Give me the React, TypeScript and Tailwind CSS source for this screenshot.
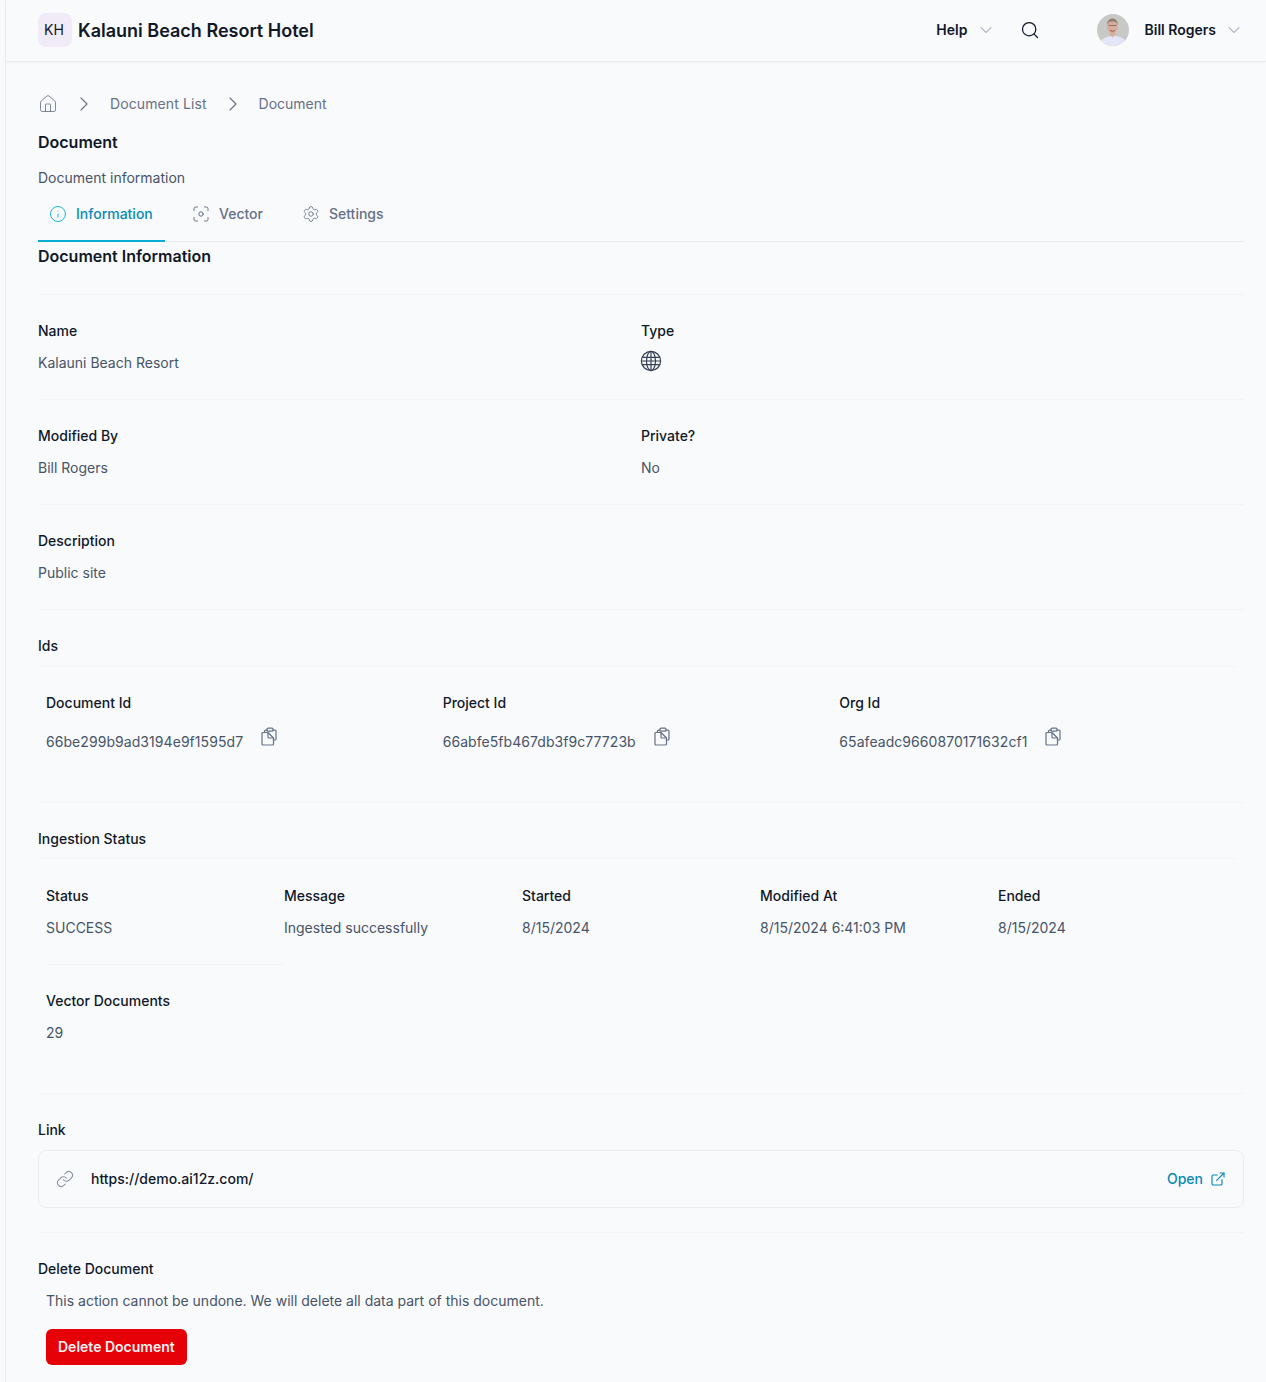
import React from "react";
import { ChevronDown, ChevronRight, Search, House, Info, Settings, Link, ExternalLink } from "lucide-react";

function Field({ label, children, className = "" }: { label: string; children: React.ReactNode; className?: string }) {
  return (
    <div className={className}>
      <div className="text-sm leading-5 font-medium text-[#101828]">{label}</div>
      <div className="mt-3 text-sm leading-5 text-[#475467]">{children}</div>
    </div>
  );
}

function Clip() {
  return (
    <svg width="16" height="20" viewBox="0 0 16 20" fill="none" stroke="#667085" strokeWidth="1.2" strokeLinejoin="round" strokeLinecap="round" className="block">
      <rect x="6" y="1.200" width="6" height="3" rx="1" />
      <path d="M3.500 5V4.200a1 1 0 0 1 1-1H6" />
      <path d="M12 3.200h2a1 1 0 0 1 1 1V12a1 1 0 0 1-1 1h-1.500" />
      <path d="M2 5.500h5l5.500 5.500v6a1 1 0 0 1-1 1H2a1 1 0 0 1-1-1V6.500a1 1 0 0 1 1-1Z" />
      <path d="M7 5.500V10a1 1 0 0 0 1 1h4.500" />
    </svg>
  );
}

function Scan() {
  return (
    <svg width="16" height="16" viewBox="0 0 16 16" fill="none" stroke="#667085" strokeWidth="1" strokeLinecap="round">
      <path d="M1 4.500V2.600A1.600 1.600 0 0 1 2.600 1h1.900M11.500 1h1.900A1.600 1.600 0 0 1 15 2.600v1.900M15 11.500v1.900a1.600 1.600 0 0 1-1.600 1.600h-1.900M4.500 15H2.600A1.600 1.600 0 0 1 1 13.400v-1.900" />
      <circle cx="8" cy="8" r="2.200" />
    </svg>
  );
}

function GlobeGrid() {
  return (
    <svg width="22" height="22" viewBox="0 0 22 22" fill="none" stroke="#344054" strokeWidth="1.2">
      <circle cx="11" cy="11" r="9.600" />
      <ellipse cx="11" cy="11" rx="4.500" ry="9.600" />
      <path d="M11 1.400v19.200M2.200 7.300h17.600M1.400 11h19.200M2.200 14.700h17.600" />
    </svg>
  );
}

function Face() {
  return (
    <svg width="32" height="32" viewBox="0 0 32 32" className="rounded-full block">
      <rect width="32" height="32" fill="#c8c8c6" />
      <path d="M2 32c1-7 6-9.500 14-10s13 3 14 10Z" fill="#e2e6f6" />
      <ellipse cx="15.500" cy="12.500" rx="5.500" ry="7" fill="#d6ad9c" />
      <path d="M10 11c0-4 2.500-6.500 5.500-6.500S21 7 21 11c-1-2.500-2-3.500-5.500-3.500S11 8.500 10 11Z" fill="#8f8074" />
      <path d="M11.500 11.500h8" stroke="#6b5a52" strokeWidth="0.7" />
      <path d="M13 16.500q2.500 1.500 5 0" stroke="#8a4a44" strokeWidth="0.8" fill="none" />
      <path d="M12.500 20l3 3.500 3-3.500v-1h-6Z" fill="#d6ad9c" />
    </svg>
  );
}

function Divider() {
  return <div className="h-px bg-[#f2f4f7]" />;
}

function IdCell({ label, value }: { label: string; value: string }) {
  return (
    <div>
      <div className="text-sm leading-5 font-medium text-[#101828]">{label}</div>
      <div className="mt-[17px] h-6 flex items-center text-sm text-[#475467]">
        <span className="tracking-[0.06px]">{value}</span>
        <span className="ml-[18px] -mt-[10px]"><Clip /></span>
      </div>
    </div>
  );
}

export default function App() {
  return (
    <div className="min-h-[1382px] bg-[#f9fafc] font-['Inter',sans-serif] pl-[5px]">
      <div className="border-l border-[#eaecf0] min-h-[1382px]">
        <header className="h-[62px] border-b border-[#eaecf0] flex items-center pl-[32px] pr-[22px] pb-[2px] shadow-[0_1px_2px_rgba(16,24,40,0.03)]">
          <div className="w-[34px] h-[34px] rounded-lg bg-[#f0ebf7] flex items-center justify-center pr-[2px] text-sm text-[#101828]">KH</div>
          <div className="ml-[6px] mt-[2px] text-lg leading-7 font-semibold text-[#101828]">Kalauni Beach Resort Hotel</div>
          <div className="ml-auto flex items-center">
            <span className="text-sm leading-5 font-semibold text-[#101828]">Help</span>
            <ChevronDown size={20} strokeWidth={1.25} className="ml-[9px] text-[#98a2b3]" />
            <Search size={20} strokeWidth={1.5} className="ml-[24px] text-[#101828]" />
            <div className="ml-[57px]"><Face /></div>
            <span className="ml-[15px] text-sm leading-5 font-semibold text-[#101828]">Bill Rogers</span>
            <ChevronDown size={20} strokeWidth={1.25} className="ml-[8px] text-[#98a2b3]" />
          </div>
        </header>

        <main className="pl-[32px] pr-[22px]">
          <nav className="mt-[32px] h-5 flex items-center gap-[14px] text-sm text-[#667085]">
            <House size={20} strokeWidth={1} className="text-[#667085]" />
            <ChevronRight size={24} strokeWidth={1.1} className="text-[#667085]" />
            <span className="tracking-[0.1px]">Document List</span>
            <ChevronRight size={24} strokeWidth={1.1} className="text-[#667085]" />
            <span>Document</span>
          </nav>
          <h1 className="mt-[16px] text-base leading-6 font-semibold text-[#101828]">Document</h1>
          <p className="mt-[14px] text-sm leading-5 text-[#475467]">Document information</p>

          <div className="mt-[6px] h-[48px] border-b border-[#eaecf0] flex text-sm leading-5">
            <div className="w-[127px] h-[48px] border-b-2 border-[#06aed4] flex items-center gap-[9px] pl-[11px] pb-[6px] text-[#088ab2] font-medium">
              <Info size={18} strokeWidth={1.2} className="text-[#06aed4]" />
              Information
            </div>
            <div className="ml-[28px] flex items-center gap-[10px] pb-[8px] text-[#667085] font-medium h-[48px]">
              <Scan />
              Vector
            </div>
            <div className="ml-[39px] flex items-center gap-[9px] pb-[8px] text-[#667085] font-medium h-[48px]">
              <Settings size={18} strokeWidth={1.1} />
              Settings
            </div>
          </div>

          <h2 className="mt-[2px] text-base leading-6 font-semibold text-[#101828]">Document Information</h2>
          <div className="mt-[26px]"><Divider /></div>

          <div className="pt-[26px] pb-[26px] grid grid-cols-2">
            <Field label="Name">Kalauni Beach Resort</Field>
            <div>
              <div className="text-sm leading-5 font-medium text-[#101828]">Type</div>
              <div className="mt-[9px] -ml-px"><GlobeGrid /></div>
            </div>
          </div>
          <Divider />
          <div className="pt-[26px] pb-[26px] grid grid-cols-2">
            <Field label="Modified By">Bill Rogers</Field>
            <Field label="Private?">No</Field>
          </div>
          <Divider />
          <div className="pt-[26px] pb-[26px]">
            <Field label="Description">Public site</Field>
          </div>
          <Divider />

          <div className="mt-[26px] text-sm leading-5 font-medium text-[#101828]">Ids</div>
          <div className="mt-[10px] mr-[8px]"><Divider /></div>
          <div className="px-[8px] pt-[26px] pb-[48px] grid grid-cols-3">
            <IdCell label="Document Id" value="66be299b9ad3194e9f1595d7" />
            <IdCell label="Project Id" value="66abfe5fb467db3f9c77723b" />
            <IdCell label="Org Id" value="65afeadc9660870171632cf1" />
          </div>
          <Divider />

          <div className="mt-[26px] text-sm leading-5 font-medium text-[#101828]">Ingestion Status</div>
          <div className="mt-[9px] mr-[8px]"><Divider /></div>
          <div className="pl-[8px] pt-[27px] grid grid-cols-5 w-[1198px]">
            <Field label="Status">SUCCESS</Field>
            <Field label="Message">Ingested successfully</Field>
            <Field label="Started">8/15/2024</Field>
            <Field label="Modified At">8/15/2024 6:41:03 PM</Field>
            <Field label="Ended">8/15/2024</Field>
          </div>
          <div className="ml-[8px] mt-[26px] w-[238px]"><Divider /></div>
          <div className="pl-[8px] pt-[26px] pb-[50px]">
            <Field label="Vector Documents">29</Field>
          </div>
          <Divider />

          <div className="mt-[26px] text-sm leading-5 font-medium text-[#101828]">Link</div>
          <div className="mt-[10px] h-[58px] rounded-lg border border-[#eaecf0] flex items-center pl-[17px] pr-[17px]">
            <Link size={18} strokeWidth={1.5} className="text-[#8a94a6]" />
            <span className="ml-[17px] text-sm leading-5 font-medium text-[#101828]">https://demo.ai12z.com/</span>
            <span className="ml-auto text-sm leading-5 font-medium text-[#088ab2]">Open</span>
            <ExternalLink size={16} strokeWidth={1.75} className="ml-[7px] text-[#088ab2]" />
          </div>
          <div className="mt-[24px]"><Divider /></div>

          <div className="mt-[26px] text-sm leading-5 font-medium text-[#101828]">Delete Document</div>
          <p className="mt-[12px] ml-[8px] text-sm leading-5 text-[#475467]">This action cannot be undone. We will delete all data part of this document.</p>
          <button className="mt-[18px] ml-[8px] h-9 px-3 rounded-md bg-[#e60008] text-sm leading-5 font-semibold text-[#fdf2f2] block">Delete Document</button>
        </main>
      </div>
    </div>
  );
}
